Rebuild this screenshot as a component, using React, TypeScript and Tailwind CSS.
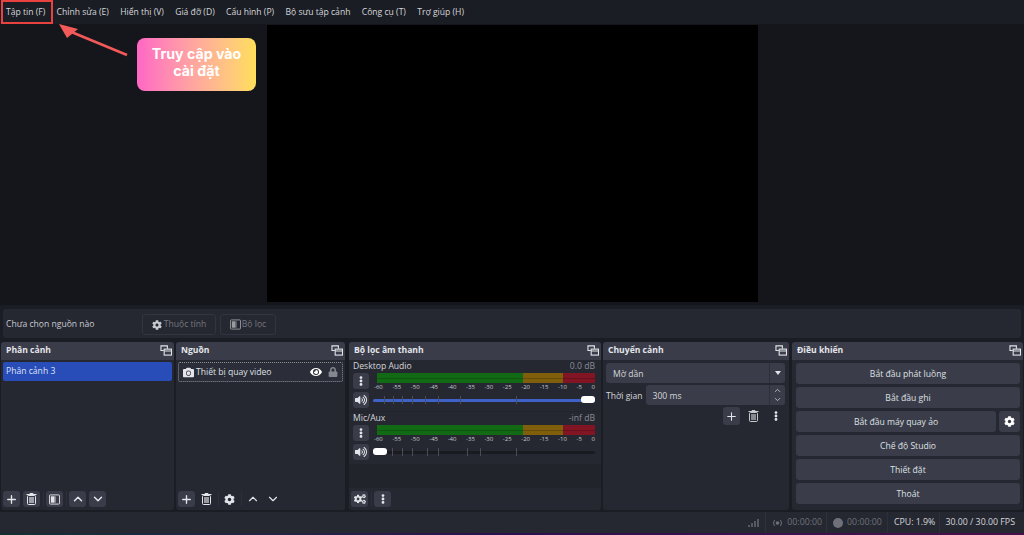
import React from 'react';
import { Plus, ChevronUp, ChevronDown } from 'lucide-react';
import { FaCog, FaCogs, FaCamera, FaEye, FaLock, FaVolumeUp, FaEllipsisV } from 'react-icons/fa';

const font = "font-['Open_Sans','Noto_Sans',sans-serif]";

const DockIcon = () => (
  <svg width="12" height="11" viewBox="0 0 13 12" fill="none" stroke="#e4e5ea" strokeWidth="1.2">
    <path d="M8 4V1H1v5h3" />
    <rect x="4.5" y="4.5" width="8" height="6.5" />
    <path d="M4.5 6.5h8" />
  </svg>
);

const FilterIcon = ({ size = 12 }: { size?: number }) => (
  <svg width={size} height={size} viewBox="0 0 12 12">
    <rect x="0.5" y="1" width="11" height="10" rx="1" fill="none" stroke="currentColor" />
    <rect x="2" y="2.5" width="4" height="7" fill="currentColor" />
    <rect x="6" y="2.5" width="1.5" height="7" fill="currentColor" opacity="0.5" />
  </svg>
);

const TrashIcon = () => (
  <svg width="11" height="12" viewBox="0 0 11 12" fill="none" stroke="currentColor">
    <path d="M0.5 1.5h10" strokeWidth="1.2" />
    <path d="M4 1V0.5h3V1" />
    <rect x="1.5" y="2.5" width="8" height="9" rx="1" />
    <rect x="3" y="4" width="5" height="6" fill="currentColor" opacity="0.6" stroke="none" />
  </svg>
);

const Dock = ({ title, className, children }: { title: string; className: string; children: React.ReactNode }) => (
  <section className={`flex flex-col overflow-hidden rounded-[3px] bg-[#252831] ${className}`}>
    <header className="flex h-[18px] shrink-0 items-center justify-between bg-[#3a3d49] pb-[2px] pl-[5px] pr-[2px]">
      <span className="text-[8.6px] font-bold text-[#e4e5ea]">{title}</span>
      <DockIcon />
    </header>
    {children}
  </section>
);

const ToolBtn = ({ children, on = true, wide = false }: { children: React.ReactNode; on?: boolean; wide?: boolean }) => (
  <span className={`flex h-[16px] items-center justify-center rounded-[3px] text-[#e4e5ea] ${wide ? 'w-[17px]' : 'w-[16px]'} ${on ? 'bg-[#3a3d49]' : ''}`}>
    {children}
  </span>
);

const Sep = () => <span className="mx-[-0.5px] h-[14px] w-px bg-[#2d303a]" />;

const Meter = () => (
  <div className="flex-1">
    <div className="relative flex h-[10px]">
      <div className="w-[146px] bg-[#126b14]" />
      <div className="w-[40px] bg-[#7f5f0c]" />
      <div className="flex-1 bg-[#821524]" />
      <div className="absolute inset-x-0 top-[5px] h-px bg-black/20" />
    </div>
    <div className="-ml-[3px] flex justify-between text-[6px] leading-[8px] text-[#c8c9d0]">
      {['-60', '-55', '-50', '-45', '-40', '-35', '-30', '-25', '-20', '-15', '-10', '-5', '0'].map((t) => (
        <span key={t}>{t}</span>
      ))}
    </div>
  </div>
);

const Channel = ({ name, level, full, ticks }: { name: string; level: string; full: boolean; ticks: number[] }) => (
  <div className="flex flex-col pl-[4px] pr-[6px]">
    <div className="flex h-[13px] items-center justify-between text-[8.6px]">
      <span className="text-[#d6d7dc]">{name}</span>
      <span className="text-[#8b8d96]">{level}</span>
    </div>
    <div className="flex items-start gap-[8px]">
      <ToolBtn><FaEllipsisV size={10} /></ToolBtn>
      <Meter />
    </div>
    <div className="mt-[1px] flex items-center gap-[4px]">
      <ToolBtn><FaVolumeUp size={12} /></ToolBtn>
      <div className="relative flex h-[12px] flex-1 items-center">
        {ticks.map((x) => (
          <span key={x} className="absolute top-[2px] h-[8px] w-px bg-[#4a4d58]" style={{ left: x }} />
        ))}
        <div className={`h-[3px] w-full rounded-full ${full ? 'bg-[#3f62c8]' : 'bg-[#191b21]'}`} />
        <div className={`absolute top-[2px] h-[7px] w-[14px] rounded-[3px] bg-white ${full ? 'right-0' : 'left-0'}`} />
      </div>
    </div>
  </div>
);

const CtrlBtn = ({ label, className = '' }: { label: string; className?: string }) => (
  <button className={`flex h-[21px] items-center justify-center rounded-[3px] bg-[#3a3d49] pt-[2px] text-[8.6px] text-[#dfe0e5] ${className}`}>
    {label}
  </button>
);

const menus = ['Chỉnh sửa (E)', 'Hiển thị (V)', 'Giá đỡ (D)', 'Cấu hình (P)', 'Bộ sưu tập cảnh', 'Công cụ (T)', 'Trợ giúp (H)'];

export default function App() {
  return (
    <div className={`relative flex h-[535px] w-[1024px] flex-col overflow-hidden bg-[#1b1d24] ${font}`}>
      {/* Menu bar */}
      <nav className="flex h-[24px] shrink-0 items-center gap-[11.3px] bg-[#1b1d24] pl-[6px] text-[8.6px] text-[#d6d7dc]">
        <span>Tập tin (F)</span>
        {menus.map((m) => (
          <span key={m}>{m}</span>
        ))}
      </nav>

      {/* Preview */}
      <div className="flex h-[281px] shrink-0 justify-center bg-[#15161c] pt-px">
        <div className="h-[277px] w-[491px] bg-black" />
      </div>

      {/* Source toolbar */}
      <div className="mx-[3px] mt-[4px] flex h-[29px] shrink-0 items-center rounded-[3px] bg-[#252831] pl-[3px] pt-[2px] text-[8.6px]">
        <span className="w-[136px] text-[#c9cad0]">Chưa chọn nguồn nào</span>
        <span className="flex h-[21px] w-[74px] items-center justify-center gap-[2px] rounded-[3px] border border-[#32353f] text-[#75777f]">
          <FaCog size={10} className="text-[#c9cad0]" />Thuộc tính
        </span>
        <span className="ml-[4px] flex h-[21px] w-[56px] items-center justify-center gap-[1px] rounded-[3px] border border-[#32353f] text-[#75777f]">
          <span className="text-[#9a9ba0]"><FilterIcon size={11} /></span>Bộ lọc
        </span>
      </div>

      {/* Docks */}
      <div className="mt-[4px] flex h-[168px] shrink-0 gap-[2px] px-px">
        <Dock title="Phân cảnh" className="w-[173px]">
          <div className="flex-1 p-[2px]">
            <div className="flex h-[19px] items-center rounded-[2px] bg-[#284cb8] pl-[3px] text-[8.6px] text-[#dfe3f2]">Phân cảnh 3</div>
          </div>
          <div className="flex h-[22px] items-center gap-[3px] pl-[2px]">
            <ToolBtn wide><Plus size={13} strokeWidth={2.5} /></ToolBtn>
            <ToolBtn wide><TrashIcon /></ToolBtn>
            <Sep />
            <ToolBtn wide><FilterIcon size={11} /></ToolBtn>
            <Sep />
            <ToolBtn wide><ChevronUp size={14} strokeWidth={2.5} /></ToolBtn>
            <ToolBtn wide><ChevronDown size={14} strokeWidth={2.5} /></ToolBtn>
          </div>
        </Dock>

        <Dock title="Nguồn" className="w-[169px]">
          <div className="flex-1 p-[2px]">
            <div className="flex h-[20px] items-center rounded-[2px] border border-dotted border-[#8d8f96] bg-[#2b2e38] px-[4px] text-[8.6px] text-[#dfe0e5]">
              <FaCamera size={11} className="mr-[2px] text-[#e4e5ea]" />
              <span className="flex-1">Thiết bị quay video</span>
              <FaEye size={12} className="mr-[6px] text-white" />
              <FaLock size={10} className="text-[#85878e]" />
            </div>
          </div>
          <div className="flex h-[22px] items-center gap-[3px] pl-[2px]">
            <ToolBtn wide><Plus size={13} strokeWidth={2.5} /></ToolBtn>
            <ToolBtn wide on={false}><TrashIcon /></ToolBtn>
            <Sep />
            <ToolBtn wide on={false}><FaCog size={11} /></ToolBtn>
            <Sep />
            <ToolBtn wide on={false}><ChevronUp size={14} /></ToolBtn>
            <ToolBtn wide on={false}><ChevronDown size={14} /></ToolBtn>
          </div>
        </Dock>

        <Dock title="Bộ lọc âm thanh" className="ml-[2px] w-[252px]">
          <div className="flex h-[128px] flex-col bg-[#1b1d24]/40">
            <div className="flex h-[51px] flex-col bg-[#252831]">
              <Channel name="Desktop Audio" level="0.0 dB" full ticks={[11, 20, 29, 39, 52, 65, 87, 143]} />
            </div>
            <div className="mt-px flex h-[52px] flex-col bg-[#252831]">
              <Channel name="Mic/Aux" level="-inf dB" full={false} ticks={[19, 29, 39, 54, 65, 94, 107, 143]} />
            </div>
          </div>
          <div className="flex h-[22px] items-center gap-[3px] pl-[2px]">
            <ToolBtn wide><FaCogs size={12} /></ToolBtn>
            <Sep />
            <ToolBtn wide><FaEllipsisV size={10} /></ToolBtn>
          </div>
        </Dock>

        <Dock title="Chuyển cảnh" className="w-[186px]">
          <div className="flex flex-col gap-[2px] pl-[3px] pr-[4px] pt-[3px] text-[8.6px] text-[#d6d7dc]">
            <div className="flex h-[20px] items-center rounded-[3px] bg-[#3a3d49] pl-[7px]">
              <span className="flex-1 pt-[2px]">Mờ dần</span>
              <span className="flex h-full w-[16px] items-center justify-center border-l border-[#2d303a]">
                <span className="h-0 w-0 border-x-[3.5px] border-t-[4px] border-x-transparent border-t-[#e4e5ea]" />
              </span>
            </div>
            <div className="flex h-[20px] items-center gap-[3px]">
              <span className="pt-[2px]">Thời gian</span>
              <div className="flex h-full flex-1 items-center rounded-[3px] bg-[#3a3d49] pl-[7px]">
                <span className="flex-1 pt-[2px]">300 ms</span>
                <span className="flex h-full w-[16px] flex-col items-center justify-center border-l border-[#2d303a]">
                  <ChevronUp size={9} /><ChevronDown size={9} />
                </span>
              </div>
            </div>
            <div className="flex h-[18px] items-center justify-end gap-[5px] pr-px">
              <span className="flex h-[18px] w-[17px] items-center justify-center rounded-[3px] bg-[#3a3d49] text-[#e4e5ea]"><Plus size={13} /></span>
              <span className="flex w-[17px] justify-center text-[#c9cad0]"><TrashIcon /></span>
              <span className="flex w-[17px] justify-center text-[#e4e5ea]"><FaEllipsisV size={10} /></span>
            </div>
          </div>
        </Dock>

        <Dock title="Điều khiển" className="ml-px flex-1">
          <div className="flex flex-col gap-[3px] pl-[4px] pr-[3px] pt-[3px]">
            <CtrlBtn label="Bắt đầu phát luồng" />
            <CtrlBtn label="Bắt đầu ghi" />
            <div className="flex gap-[3px]">
              <CtrlBtn label="Bắt đầu máy quay ảo" className="flex-1" />
              <span className="flex h-[21px] w-[21px] items-center justify-center rounded-[3px] bg-[#3a3d49] text-white"><FaCog size={11} /></span>
            </div>
            <CtrlBtn label="Chế độ Studio" />
            <CtrlBtn label="Thiết đặt" />
            <CtrlBtn label="Thoát" />
          </div>
        </Dock>
      </div>

      {/* Status bar */}
      <footer className="mt-[2px] flex h-[21px] shrink-0 items-center justify-end bg-[#252831] pr-[9px] text-[8.8px] text-[#6f717a]">
        <span className="flex h-full items-end gap-px pb-[6px] pr-[6px]">
          <span className="h-[2px] w-[2px] bg-[#565861]" />
          <span className="h-[4px] w-[2px] bg-[#565861]" />
          <span className="h-[6px] w-[2px] bg-[#565861]" />
          <span className="h-[8px] w-[2px] bg-[#565861]" />
        </span>
        <span className="flex h-full items-center gap-[4px] border-l border-[#2e313b] pl-[6px] pr-[4px]">
          <svg width="11" height="8" viewBox="0 0 11 8" fill="none" stroke="#6f717a">
            <circle cx="5.500" cy="4" r="1.800" fill="#6f717a" stroke="none" />
            <path d="M2.500 1Q0.500 4 2.500 7M8.500 1Q10.500 4 8.500 7" />
          </svg>
          00:00:00
        </span>
        <span className="flex h-full items-center gap-[4px] border-l border-[#2e313b] pl-[6px] pr-[5px]">
          <span className="h-[10px] w-[10px] rounded-full bg-[#6f717a]" />00:00:00
        </span>
        <span className="flex h-full items-center border-l border-[#2e313b] pl-[6px] pr-[4px] text-[#d6d7dc]">CPU: 1.9%</span>
        <span className="flex h-full items-center border-l border-[#2e313b] pl-[5px] text-[#d6d7dc]">30.00 / 30.00 FPS</span>
      </footer>
      <div className="h-[2px] bg-gradient-to-r from-[#123034] via-[#2a1050] to-[#4a0f4a]" />

      {/* Annotation over the screenshot */}
      <div className="absolute left-px top-0 h-[24px] w-[52px] border-[2px] border-[#e8413f]" />
      <svg className="absolute left-[55px] top-[20px]" width="80" height="40" viewBox="0 0 80 40" fill="none">
        <path d="M72 35L14 11" stroke="#f25a5a" strokeWidth="2.5" />
        <path d="M4 4l19 5-11 9z" fill="#f25a5a" />
      </svg>
      <div className="absolute left-[137px] top-[38px] flex h-[53px] w-[119px] items-center justify-center rounded-[8px] bg-gradient-to-r from-[#ff66c4] to-[#ffde59] pb-[5px] text-center text-[14.2px] font-bold leading-[17px] text-white">
        <span className="w-[100px] font-['Inter',sans-serif]">Truy cập vào cài đặt</span>
      </div>
    </div>
  );
}
